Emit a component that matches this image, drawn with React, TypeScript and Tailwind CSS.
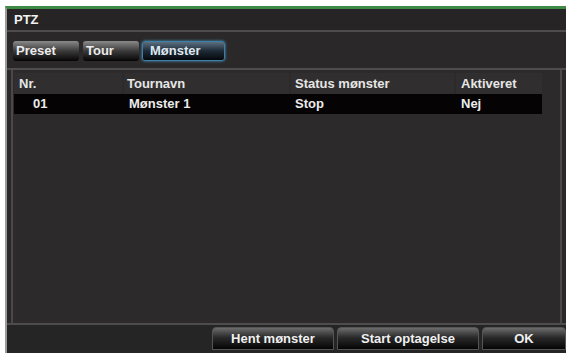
const font = { fontFamily: '"Liberation Sans", Arial, sans-serif' };

const cols = ["w-[108px]", "w-[165px]", "w-[163px]", "w-[86px]"];

function Tab({ label, active }: { label: string; active?: boolean }) {
  return (
    <div
      className={
        active
          ? "flex h-[20px] w-[83px] items-center rounded-[3px] border border-[#3d7fa6] bg-[linear-gradient(180deg,#5b6f80_0%,#1d2a36_50%,#05080c_100%)] pl-[7px] text-[13px] font-bold text-[#dfe8f0] shadow-[0_0_3px_#4d9fd0]"
          : "flex h-[20px] items-center rounded-[3px] bg-[linear-gradient(180deg,#8a8a8a_0%,#3a3a3a_50%,#050505_100%)] pl-[3px] text-[13px] font-bold text-[#ececec]"
      }
    >
      {label}
    </div>
  );
}

function Btn({ label, w }: { label: string; w: string }) {
  return (
    <div
      className={`flex h-[23px] ${w} items-center justify-center rounded-t-[4px] border border-[#555] bg-[linear-gradient(180deg,#6c6c6c_0%,#2a2a2a_45%,#050505_100%)] text-[13px] font-bold text-[#f0f0f0]`}
    >
      {label}
    </div>
  );
}

export default function App() {
  return (
    <div className="h-[353px] w-[573px] bg-white pl-[5px] pr-[7px] pt-[6px]" style={font}>
      <div className="flex h-full flex-col border-l-2 border-t-[3px] border-l-[#9a9a9a] border-t-[#3e8a45] bg-[#2a2828]">
        <div className="flex h-[23px] items-center border-b-2 border-[#4e4c4c] bg-[#262424] pl-[7px] text-[13px] font-bold text-[#f2f2f2]">
          PTZ
        </div>
        <div className="flex h-[38px] items-center gap-[3px] border-b-2 border-[#4e4c4c] pl-[6px] pt-[2px]">
          <div className="w-[66px]">
            <Tab label="Preset" />
          </div>
          <div className="w-[57px] pl-[1px]">
            <Tab label="Tour" />
          </div>
          <Tab label="Mønster" active />
        </div>
        <div className="mx-[4px] flex flex-1 flex-col border-l-2 border-r-2 border-[#4a4848] bg-[#2c2a2a] pl-[1px] pt-[3px]">
          <div className="flex h-[21px] gap-[2px] text-[13px] font-bold text-[#e6e6e6]">
            <div className={`${cols[0]} flex items-center bg-[#302e2e] pl-[5px]`}>Nr.</div>
            <div className={`${cols[1]} flex items-center bg-[#302e2e] pl-[3px]`}>Tournavn</div>
            <div className={`${cols[2]} flex items-center bg-[#302e2e] pl-[4px]`}>Status mønster</div>
            <div className={`${cols[3]} flex items-center bg-[#302e2e] pl-[5px]`}>Aktiveret</div>
          </div>
          <div className="flex h-[20px] w-[528px] gap-[2px] bg-[#050303] text-[13px] font-bold text-[#ececec]">
            <div className={`${cols[0]} flex items-center pl-[19px]`}>01</div>
            <div className={`${cols[1]} flex items-center pl-[5px]`}>Mønster 1</div>
            <div className={`${cols[2]} flex items-center pl-[4px]`}>Stop</div>
            <div className={`${cols[3]} flex items-center pl-[5px]`}>Nej</div>
          </div>
        </div>
        <div className="flex h-[30px] items-start justify-end gap-[3px] border-t-2 border-[#4e4c4c] bg-[#262525] pr-0 pt-[2px]">
          <Btn label="Hent mønster" w="w-[122px]" />
          <Btn label="Start optagelse" w="w-[142px]" />
          <Btn label="OK" w="w-[84px]" />
        </div>
      </div>
    </div>
  );
}
